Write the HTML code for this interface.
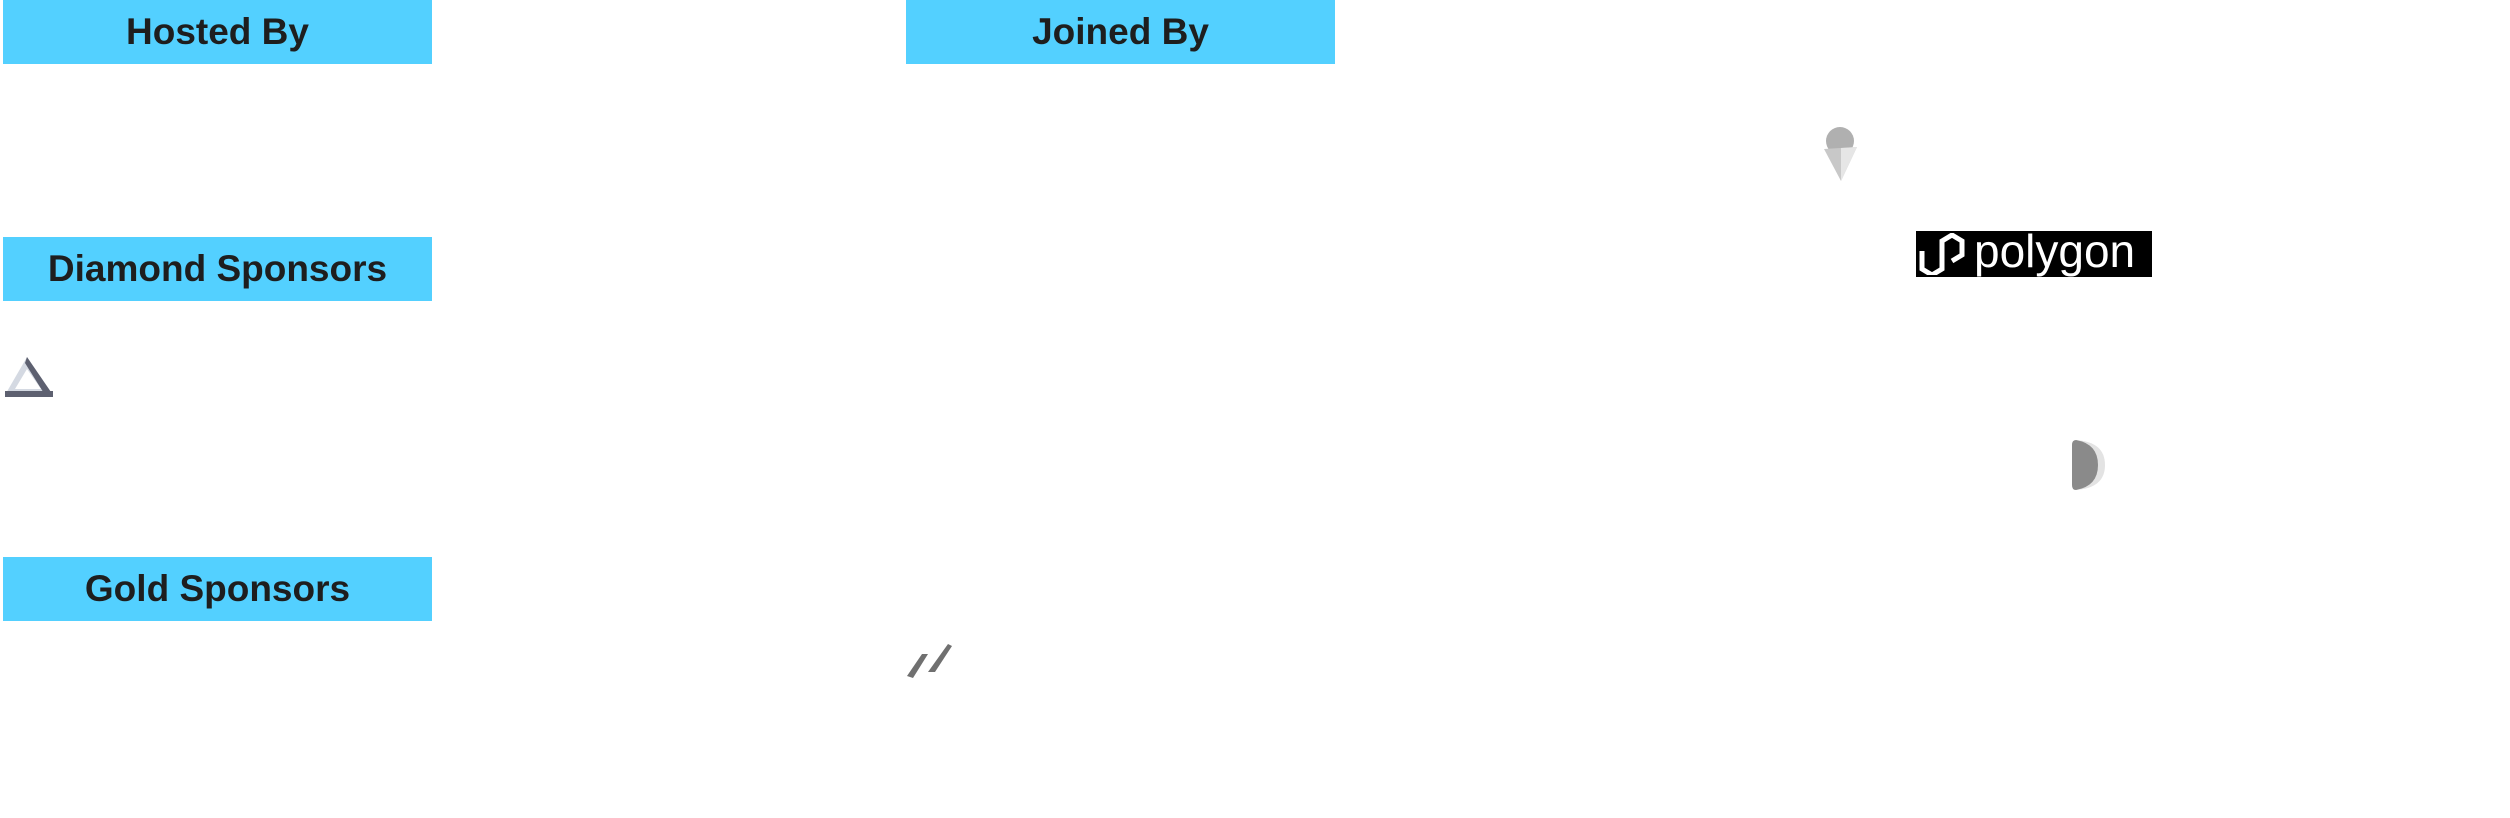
<!DOCTYPE html>
<html><head><style>
body{margin:0;width:2510px;height:818px;background:#fff;position:relative;overflow:hidden;font-family:"Liberation Sans",sans-serif}
.bar{position:absolute;background:#53d0ff;height:64px;display:flex;align-items:center;justify-content:center;font-weight:bold;font-size:37px;color:#1e1e1e;letter-spacing:0px}
</style></head><body>
<div class="bar" style="left:3px;top:0;width:429px">Hosted By</div>
<div class="bar" style="left:906px;top:0;width:429px">Joined By</div>
<div class="bar" style="left:3px;top:237px;width:429px">Diamond Sponsors</div>
<div class="bar" style="left:3px;top:557px;width:429px">Gold Sponsors</div>
<svg style="position:absolute;left:3px;top:355px" width="52" height="44" viewBox="0 0 52 44">
<path d="M24 2 L50 40 L2 40 Z M24 14 L12 34 L38 34 Z" fill="#d4d9e2" fill-rule="evenodd"/>
<path d="M24 2 L50 40 L42 40 L22 8 Z" fill="#5d6070"/>
<rect x="2" y="36" width="48" height="6" fill="#5d6070"/>
</svg>
<svg style="position:absolute;left:906px;top:642px" width="50" height="38" viewBox="0 0 50 38">
<path d="M1 34 L16 12 L22 12 L7 36 Z M22 30 L42 2 L46 4 L29 30 Z" fill="#707070"/>
</svg>
<svg style="position:absolute;left:1824px;top:127px" width="34" height="55" viewBox="0 0 34 55">
<circle cx="16" cy="14" r="14" fill="#b0b0b0"/>
<path d="M0 22 L33 20 L17 54 Z" fill="#c8c8c8"/>
<path d="M17 21 L33 20 L17 54 Z" fill="#e6e6e6"/>
</svg>
<div style="position:absolute;left:1916px;top:231px;width:236px;height:46px;background:#000;color:#fff">
<svg style="position:absolute;left:2px;top:2px" width="48" height="42" viewBox="0 0 48 42">
<path d="M4 18 L4 36 L14 42 L24 36 L24 8 L34 2 L44 8 L44 22 L34 28" fill="none" stroke="#fff" stroke-width="5"/>
</svg>
<span style="position:absolute;left:58px;top:-7px;font-size:46px;letter-spacing:0px">polygon</span>
</div>
<svg style="position:absolute;left:2072px;top:440px" width="33" height="50" viewBox="0 0 33 50">
<path d="M4 0 Q33 2 33 25 Q33 48 4 50 Z" fill="#e3e3e3"/>
<path d="M4 0 Q26 4 26 25 Q26 46 4 50 Q0 50 0 45 L0 5 Q0 0 4 0Z" fill="#8a8a8a"/>
</svg>
</body></html>
